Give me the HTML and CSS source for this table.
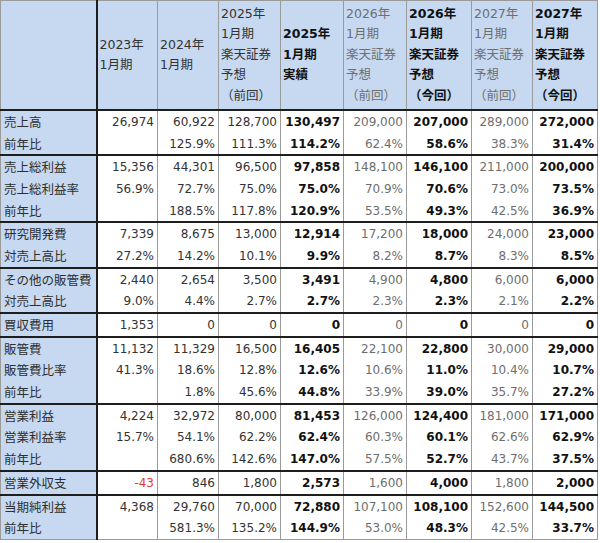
FILE: index.html
```html
<!DOCTYPE html>
<html lang="ja">
<head>
<meta charset="utf-8">
<link rel="stylesheet" href="styles.css">
</head>
<body>
<table class="fin">
<colgroup>
<col class="w-label"><col class="w61"><col class="w61"><col class="w62"><col class="w63"><col class="w63"><col class="w65"><col class="w61"><col class="w65">
</colgroup>
<thead>
<tr>
<th></th>
<th>2023年<br>1月期</th>
<th>2024年<br>1月期</th>
<th>2025年<br>1月期<br>楽天証券<br>予想<br>（前回）</th>
<th>2025年<br>1月期<br>実績</th>
<th>2026年<br>1月期<br>楽天証券<br>予想<br>（前回）</th>
<th>2026年<br>1月期<br>楽天証券<br>予想<br>（今回）</th>
<th>2027年<br>1月期<br>楽天証券<br>予想<br>（前回）</th>
<th>2027年<br>1月期<br>楽天証券<br>予想<br>（今回）</th>
</tr>
</thead>
<tbody>
<tr><td>売上高</td><td>26,974</td><td>60,922</td><td>128,700</td><td>130,497</td><td>209,000</td><td>207,000</td><td>289,000</td><td>272,000</td></tr>
<tr class="end"><td>前年比</td><td></td><td>125.9%</td><td>111.3%</td><td>114.2%</td><td>62.4%</td><td>58.6%</td><td>38.3%</td><td>31.4%</td></tr>
<tr><td>売上総利益</td><td>15,356</td><td>44,301</td><td>96,500</td><td>97,858</td><td>148,100</td><td>146,100</td><td>211,000</td><td>200,000</td></tr>
<tr><td>売上総利益率</td><td>56.9%</td><td>72.7%</td><td>75.0%</td><td>75.0%</td><td>70.9%</td><td>70.6%</td><td>73.0%</td><td>73.5%</td></tr>
<tr class="end"><td>前年比</td><td></td><td>188.5%</td><td>117.8%</td><td>120.9%</td><td>53.5%</td><td>49.3%</td><td>42.5%</td><td>36.9%</td></tr>
<tr><td>研究開発費</td><td>7,339</td><td>8,675</td><td>13,000</td><td>12,914</td><td>17,200</td><td>18,000</td><td>24,000</td><td>23,000</td></tr>
<tr class="end"><td>対売上高比</td><td>27.2%</td><td>14.2%</td><td>10.1%</td><td>9.9%</td><td>8.2%</td><td>8.7%</td><td>8.3%</td><td>8.5%</td></tr>
<tr><td>その他の販管費</td><td>2,440</td><td>2,654</td><td>3,500</td><td>3,491</td><td>4,900</td><td>4,800</td><td>6,000</td><td>6,000</td></tr>
<tr class="end"><td>対売上高比</td><td>9.0%</td><td>4.4%</td><td>2.7%</td><td>2.7%</td><td>2.3%</td><td>2.3%</td><td>2.1%</td><td>2.2%</td></tr>
<tr class="end"><td>買収費用</td><td>1,353</td><td>0</td><td>0</td><td>0</td><td>0</td><td>0</td><td>0</td><td>0</td></tr>
<tr><td>販管費</td><td>11,132</td><td>11,329</td><td>16,500</td><td>16,405</td><td>22,100</td><td>22,800</td><td>30,000</td><td>29,000</td></tr>
<tr><td>販管費比率</td><td>41.3%</td><td>18.6%</td><td>12.8%</td><td>12.6%</td><td>10.6%</td><td>11.0%</td><td>10.4%</td><td>10.7%</td></tr>
<tr class="end"><td>前年比</td><td></td><td>1.8%</td><td>45.6%</td><td>44.8%</td><td>33.9%</td><td>39.0%</td><td>35.7%</td><td>27.2%</td></tr>
<tr><td>営業利益</td><td>4,224</td><td>32,972</td><td>80,000</td><td>81,453</td><td>126,000</td><td>124,400</td><td>181,000</td><td>171,000</td></tr>
<tr><td>営業利益率</td><td>15.7%</td><td>54.1%</td><td>62.2%</td><td>62.4%</td><td>60.3%</td><td>60.1%</td><td>62.6%</td><td>62.9%</td></tr>
<tr class="end"><td>前年比</td><td></td><td>680.6%</td><td>142.6%</td><td>147.0%</td><td>57.5%</td><td>52.7%</td><td>43.7%</td><td>37.5%</td></tr>
<tr class="end"><td>営業外収支</td><td class="neg">-43</td><td>846</td><td>1,800</td><td>2,573</td><td>1,600</td><td>4,000</td><td>1,800</td><td>2,000</td></tr>
<tr><td>当期純利益</td><td>4,368</td><td>29,760</td><td>70,000</td><td>72,880</td><td>107,100</td><td>108,100</td><td>152,600</td><td>144,500</td></tr>
<tr><td>前年比</td><td></td><td>581.3%</td><td>135.2%</td><td>144.9%</td><td>53.0%</td><td>48.3%</td><td>42.5%</td><td>33.7%</td></tr>
</tbody>
</table>
</body>
</html>
```
FILE: styles.css
```css
html, body {
  margin: 0;
  padding: 0;
  background: #ffffff;
}

.fin {
  border-collapse: collapse;
  table-layout: fixed;
  width: 597px;
  font-family: "DejaVu Sans", "Noto Sans CJK JP", sans-serif;
  font-size: 12px;
  color: #333333;
  border: 1px solid #9a9a9a;
}

.w-label { width: 96px; }
.w61 { width: 61px; }
.w62 { width: 62px; }
.w63 { width: 63px; }
.w65 { width: 65px; }

.fin th {
  height: 108px;
  padding: 0 0 0 2px;
  text-align: left;
  vertical-align: middle;
  font-weight: normal;
  font-size: 12.5px;
  line-height: 20.5px;
  background: #c6d9f0;
  border-left: 1px solid #9a9a9a;
  border-bottom: 2px solid #1e1e1e;
  white-space: nowrap;
}

.fin td {
  height: 21.7px;
  padding: 0 3px 0 0;
  text-align: right;
  vertical-align: middle;
  line-height: 16px;
  border-left: 1px solid #9a9a9a;
  white-space: nowrap;
}

.fin td:first-child {
  text-align: left;
  padding: 0 0 0 3px;
  background: #c6d9f0;
  font-family: "Noto Sans CJK JP", sans-serif;
  font-size: 12.5px;
  color: #2e2e2e;
}

.fin th:first-child {
  border-left: none;
}

.fin th:nth-child(2),
.fin td:nth-child(2) {
  border-left: 2px solid #1e1e1e;
}

.fin th:nth-child(5),
.fin th:nth-child(7),
.fin th:nth-child(9),
.fin td:nth-child(5),
.fin td:nth-child(7),
.fin td:nth-child(9) {
  font-weight: bold;
  color: #111111;
}

.fin th:nth-child(6),
.fin th:nth-child(8),
.fin td:nth-child(6),
.fin td:nth-child(8) {
  color: #6e6e6e;
}

.fin tr.end td {
  border-bottom: 2px solid #1e1e1e;
}

.fin tr:last-child td {
  border-bottom: 1px solid #9a9a9a;
}

.fin td.neg {
  color: #e5392f;
}
```
